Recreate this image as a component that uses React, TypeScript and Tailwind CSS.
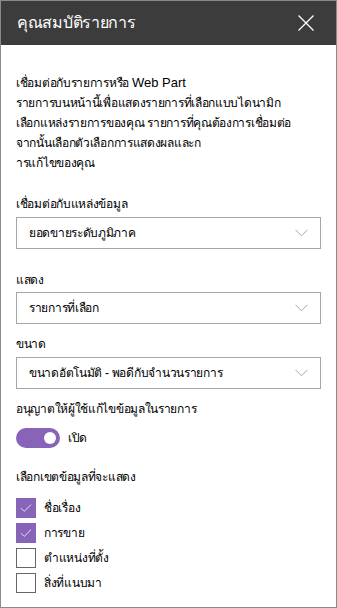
import React from "react";

const font = { fontFamily: '"Segoe UI", "Liberation Sans", "Noto Sans", sans-serif' };

function Chevron() {
    return (
        <svg width="13" height="8" viewBox="0 0 13 8" fill="none">
            <path d="M0.5 0.8 L6.5 6.8 L12.5 0.8" stroke="#a6a6a6" strokeWidth="1" />
        </svg>
    );
}

function Dropdown({ value }: { value: string }) {
    return (
        <div className="flex h-[32px] items-center justify-between border border-[#a6a6a6] pl-[12px] pr-[12px]">
            <span className="text-[12px] tracking-[-0.3px] text-black">{value}</span>
            <Chevron />
        </div>
    );
}

function Check({ checked, label }: { checked: boolean; label: string }) {
    return (
        <div className="flex items-center gap-[8px]">
            {checked ? (
                <div className="flex h-[20px] w-[20px] items-center justify-center bg-[#8764b8]">
                    <svg width="12" height="10" viewBox="0 0 12 10" fill="none">
                        <path d="M1 5.2 L4.2 8.4 L11 1.6" stroke="#e9e0f5" strokeWidth="1" />
                    </svg>
                </div>
            ) : (
                <div className="h-[20px] w-[20px] border border-[#666666] bg-white" />
            )}
            <span className="text-[12px] leading-[20px] tracking-[-0.3px] text-black">{label}</span>
        </div>
    );
}

export default function App() {
    return (
        <div className="h-[608px] w-[337px] border border-[#8a8a8a] bg-white" style={font}>
            <div className="flex h-[44px] items-center justify-between bg-[#3c3c3c] pl-[16px] pr-[22px]">
                <span className="text-[16px] tracking-[-0.3px] text-white">คุณสมบัติรายการ</span>
                <svg width="16" height="16" viewBox="0 0 16 16" fill="none">
                    <path d="M0.5 0.5 L15.5 15.5 M15.5 0.5 L0.5 15.5" stroke="#ffffff" strokeWidth="1.3" />
                </svg>
            </div>

            <div className="px-[15px] text-[12px] leading-[20px] tracking-[-0.3px] text-black">
                <p className="whitespace-nowrap pt-[28px]">
                    เชื่อมต่อกับรายการหรือ <span className="text-[13px] tracking-normal">Web Part</span>
                    <br />
                    รายการบนหน้านี้เพื่อแสดงรายการที่เลือกแบบไดนามิก
                    <br />
                    เลือกแหล่งรายการของคุณ รายการที่คุณต้องการเชื่อมต่อ
                    <br />
                    จากนั้นเลือกตัวเลือกการแสดงผลและก
                    <br />
                    ารแก้ไขของคุณ
                </p>

                <div className="mt-[21px] mb-[3px]">เชื่อมต่อกับแหล่งข้อมูล</div>
                <Dropdown value="ยอดขายระดับภูมิภาค" />

                <div className="mt-[21px] mb-[2px]">แสดง</div>
                <Dropdown value="รายการที่เลือก" />

                <div className="mt-[10px] mb-[3px]">ขนาด</div>
                <Dropdown value="ขนาดอัตโนมัติ - พอดีกับจำนวนรายการ" />

                <div className="mt-[10px]">อนุญาตให้ผู้ใช้แก้ไขข้อมูลในรายการ</div>
                <div className="mt-[9px] flex items-center gap-[8px]">
                    <div className="flex h-[20px] w-[44px] items-center justify-end rounded-full bg-[#8764b8] pr-[4px]">
                        <div className="h-[12px] w-[12px] rounded-full bg-white" />
                    </div>
                    <span>เปิด</span>
                </div>

                <div className="mt-[19px]">เลือกเขตข้อมูลที่จะแสดง</div>
                <div className="mt-[11px] flex flex-col gap-[5px]">
                    <Check checked label="ชื่อเรื่อง" />
                    <Check checked label="การขาย" />
                    <Check checked={false} label="ตำแหน่งที่ตั้ง" />
                    <Check checked={false} label="สิ่งที่แนบมา" />
                </div>
            </div>
        </div>
    );
}
